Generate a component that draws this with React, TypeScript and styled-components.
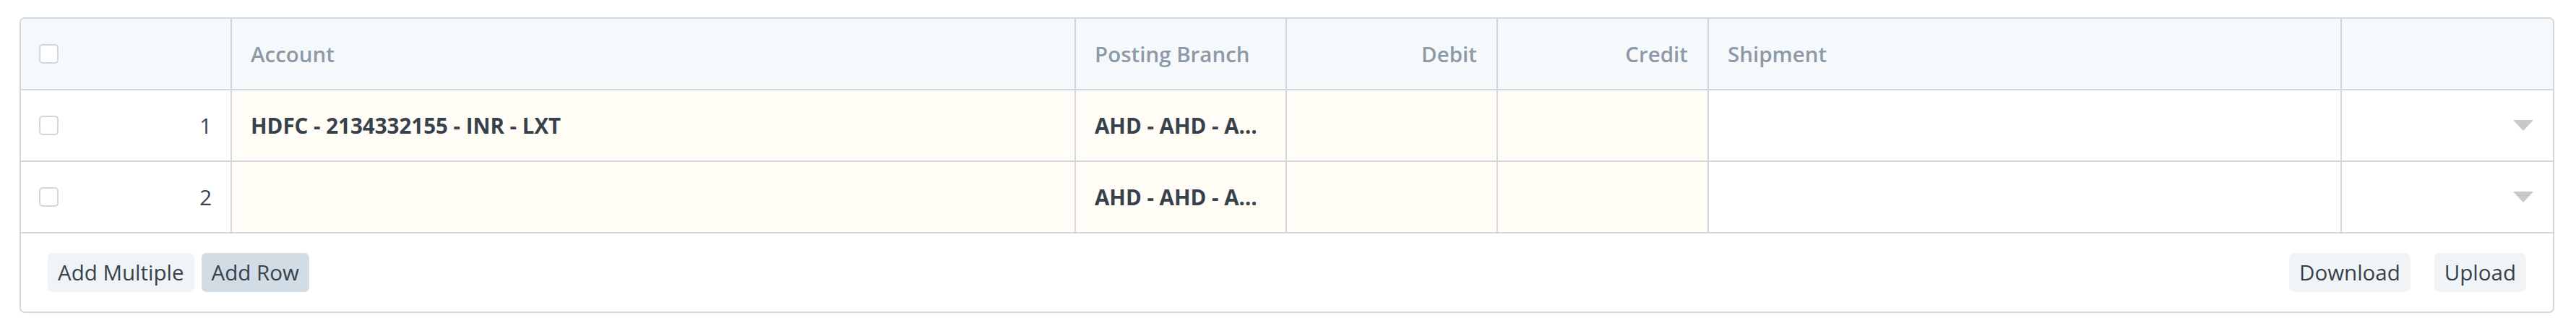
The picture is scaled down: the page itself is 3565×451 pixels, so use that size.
import React from 'react'
import styled, { createGlobalStyle } from 'styled-components'

const GlobalStyle = createGlobalStyle`
  html, body {
    margin: 0;
    padding: 0;
    background: #ffffff;
  }
  body {
    font-family: 'Open Sans', 'Noto Sans', sans-serif;
    color: #36414c;
  }
`

const Page = styled.div`
  padding: 24px 30px 0 27px;
`

const GridWrapper = styled.div`
  border: 2px solid #d1d8dd;
  border-radius: 7px;
  overflow: hidden;
`

const Row = styled.div<{ readonly header?: boolean }>`
  display: grid;
  grid-template-columns: 1fr 4fr 1fr 1fr 1fr 3fr 1fr;
  height: 99px;
  box-sizing: border-box;
  border-bottom: 2px solid #d1d8dd;
  background: ${({ header }) => (header ? '#f5f9fc' : '#ffffff')};
  font-size: 29.5px;
`

const Cell = styled.div<{
  readonly editable?: boolean
  readonly align?: 'left' | 'right'
  readonly last?: boolean
}>`
  display: flex;
  align-items: center;
  justify-content: ${({ align }) => (align === 'right' ? 'flex-end' : 'flex-start')};
  padding: 0 27px 0 26px;
  min-width: 0;
  border-right: ${({ last }) => (last ? 'none' : '2px solid #d1d8dd')};
  background: ${({ editable }) => (editable ? '#fffdf5' : 'transparent')};
  white-space: nowrap;
  overflow: hidden;
`

const IndexCell = styled(Cell)`
  justify-content: space-between;
  padding: 0 26px 0 25px;
`

const HeaderLabel = styled.span`
  color: #8d99a6;
  font-weight: 600;
`

const Value = styled.span`
  color: #36414c;
  font-weight: 700;
  overflow: hidden;
  text-overflow: ellipsis;
`

const RowNumber = styled.span`
  color: #36414c;
  font-weight: 400;
`

const Checkbox = styled.span`
  display: inline-block;
  width: 23px;
  height: 23px;
  border: 2px solid #d1d8dd;
  border-radius: 5px;
  background: #ffffff;
`

const Caret = styled.span`
  margin-left: auto;
  width: 0;
  height: 0;
  border-left: 14px solid transparent;
  border-right: 14px solid transparent;
  border-top: 15px solid #c8c8c8;
`

const Footer = styled.div`
  display: flex;
  justify-content: space-between;
  align-items: center;
  padding: 27px 37px 27px 37px;
`

const ButtonGroup = styled.div<{ readonly gap: number }>`
  display: flex;
  gap: ${({ gap }) => gap}px;
`

const Button = styled.button<{ readonly primary?: boolean }>`
  height: 54px;
  padding: 0 14px;
  border: none;
  border-radius: 7px;
  background: ${({ primary }) => (primary ? '#d1dce5' : '#f0f4f7')};
  color: #36414c;
  font-family: 'Open Sans', 'Noto Sans', sans-serif;
  font-size: 29.5px;
  line-height: 54px;
`

interface GridRow {
  readonly idx: number
  readonly account: string
  readonly branch: string
}

const rows: Array<GridRow> = [
  { idx: 1, account: 'HDFC - 2134332155 - INR - LXT', branch: 'AHD - AHD - A…' },
  { idx: 2, account: '', branch: 'AHD - AHD - A…' },
]

const App: React.FC = () => {
  return (
    <>
      <GlobalStyle />
      <Page>
        <GridWrapper>
          <Row header>
            <IndexCell>
              <Checkbox />
            </IndexCell>
            <Cell>
              <HeaderLabel>Account</HeaderLabel>
            </Cell>
            <Cell>
              <HeaderLabel>Posting Branch</HeaderLabel>
            </Cell>
            <Cell align="right">
              <HeaderLabel>Debit</HeaderLabel>
            </Cell>
            <Cell align="right">
              <HeaderLabel>Credit</HeaderLabel>
            </Cell>
            <Cell>
              <HeaderLabel>Shipment</HeaderLabel>
            </Cell>
            <Cell last />
          </Row>
          {rows.map((row) => (
            <Row key={row.idx}>
              <IndexCell>
                <Checkbox />
                <RowNumber>{row.idx}</RowNumber>
              </IndexCell>
              <Cell editable>
                <Value>{row.account}</Value>
              </Cell>
              <Cell editable>
                <Value>{row.branch}</Value>
              </Cell>
              <Cell editable align="right" />
              <Cell editable align="right" />
              <Cell />
              <Cell last>
                <Caret />
              </Cell>
            </Row>
          ))}
          <Footer>
            <ButtonGroup gap={10}>
              <Button>Add Multiple</Button>
              <Button primary>Add Row</Button>
            </ButtonGroup>
            <ButtonGroup gap={33}>
              <Button>Download</Button>
              <Button>Upload</Button>
            </ButtonGroup>
          </Footer>
        </GridWrapper>
      </Page>
    </>
  )
}

export default App
